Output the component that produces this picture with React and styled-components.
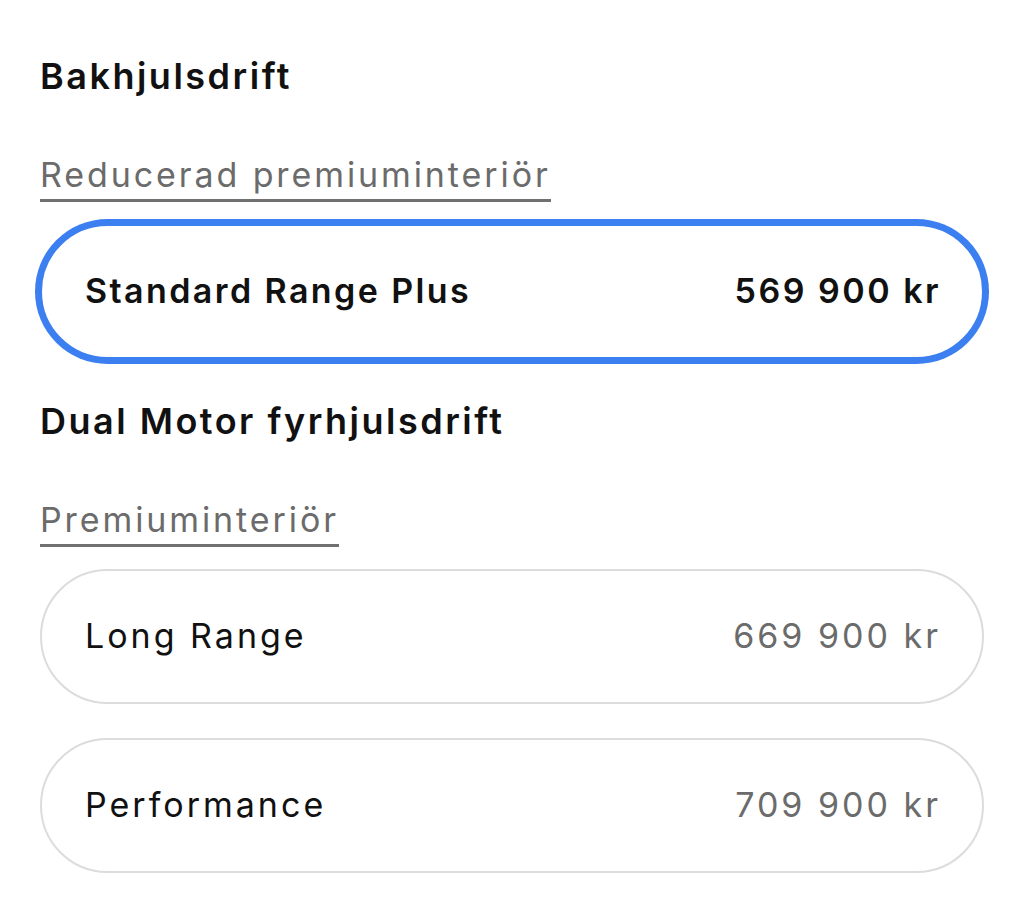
import React, { useState } from "react";
import styled, { createGlobalStyle } from "styled-components";

const GlobalStyle = createGlobalStyle`
    html, body {
        margin: 0;
        padding: 0;
        background: #fff;
    }
    body {
        font-family: "Inter", "Liberation Sans", sans-serif;
        color: #171a20;
        -webkit-font-smoothing: antialiased;
    }
`;

const Page = styled.div`
    padding: 54px 40px 40px;
    display: flex;
    flex-direction: column;
`;

const Section = styled.section`
    display: flex;
    flex-direction: column;
    align-items: flex-start;
    & + & {
        margin-top: 40px;
    }
`;

const Heading = styled.h2`
    margin: 0;
    font-size: 36px;
    line-height: 44px;
    font-weight: 600;
    letter-spacing: 2.5px;
    color: #111;
`;

const SubLabel = styled.span`
    margin-top: 55px;
    padding-bottom: 2px;
    font-size: 34px;
    line-height: 44px;
    letter-spacing: 2.9px;
    color: #6b6b6b;
    border-bottom: 3px solid #707070;
`;

const Options = styled.div`
    align-self: stretch;
    margin-top: 22px;
    display: flex;
    flex-direction: column;
    gap: 34px;
`;

const Option = styled.button`
    display: flex;
    align-items: center;
    justify-content: space-between;
    height: 135px;
    padding: 0 41px 2px 43px;
    border-radius: 68px;
    border: 2px solid ${(p) => (p.$selected ? "#3b7ff0" : "#dcdcdc")};
    box-shadow: ${(p) => (p.$selected ? "0 0 0 5px #3b7ff0" : "none")};
    background: #fff;
    font-family: inherit;
    font-size: 34px;
    cursor: pointer;
    text-align: left;
`;

const Name = styled.span`
    font-weight: ${(p) => (p.$selected ? 600 : 400)};
    letter-spacing: ${(p) => (p.$selected ? "2.4px" : "3px")};
    color: #111;
`;

const Price = styled.span`
    font-weight: ${(p) => (p.$selected ? 600 : 400)};
    letter-spacing: ${(p) => (p.$selected ? "2.5px" : "3px")};
    color: ${(p) => (p.$selected ? "#111" : "#6b6b6b")};
`;

const groups = [
    {
        title: "Bakhjulsdrift",
        interior: "Reducerad premiuminteriör",
        options: [{ id: "srp", name: "Standard Range Plus", price: "569 900 kr" }],
    },
    {
        title: "Dual Motor fyrhjulsdrift",
        interior: "Premiuminteriör",
        options: [
            { id: "lr", name: "Long Range", price: "669 900 kr" },
            { id: "perf", name: "Performance", price: "709 900 kr" },
        ],
    },
];

export default function App() {
    const [selected, setSelected] = useState("srp");

    return (
        <>
            <GlobalStyle />
            <Page>
                {groups.map((g) => (
                    <Section key={g.title}>
                        <Heading>{g.title}</Heading>
                        <SubLabel>{g.interior}</SubLabel>
                        <Options>
                            {g.options.map((o) => {
                                const on = o.id === selected;
                                return (
                                    <Option key={o.id} $selected={on} onClick={() => setSelected(o.id)}>
                                        <Name $selected={on}>{o.name}</Name>
                                        <Price $selected={on}>{o.price}</Price>
                                    </Option>
                                );
                            })}
                        </Options>
                    </Section>
                ))}
            </Page>
        </>
    );
}
